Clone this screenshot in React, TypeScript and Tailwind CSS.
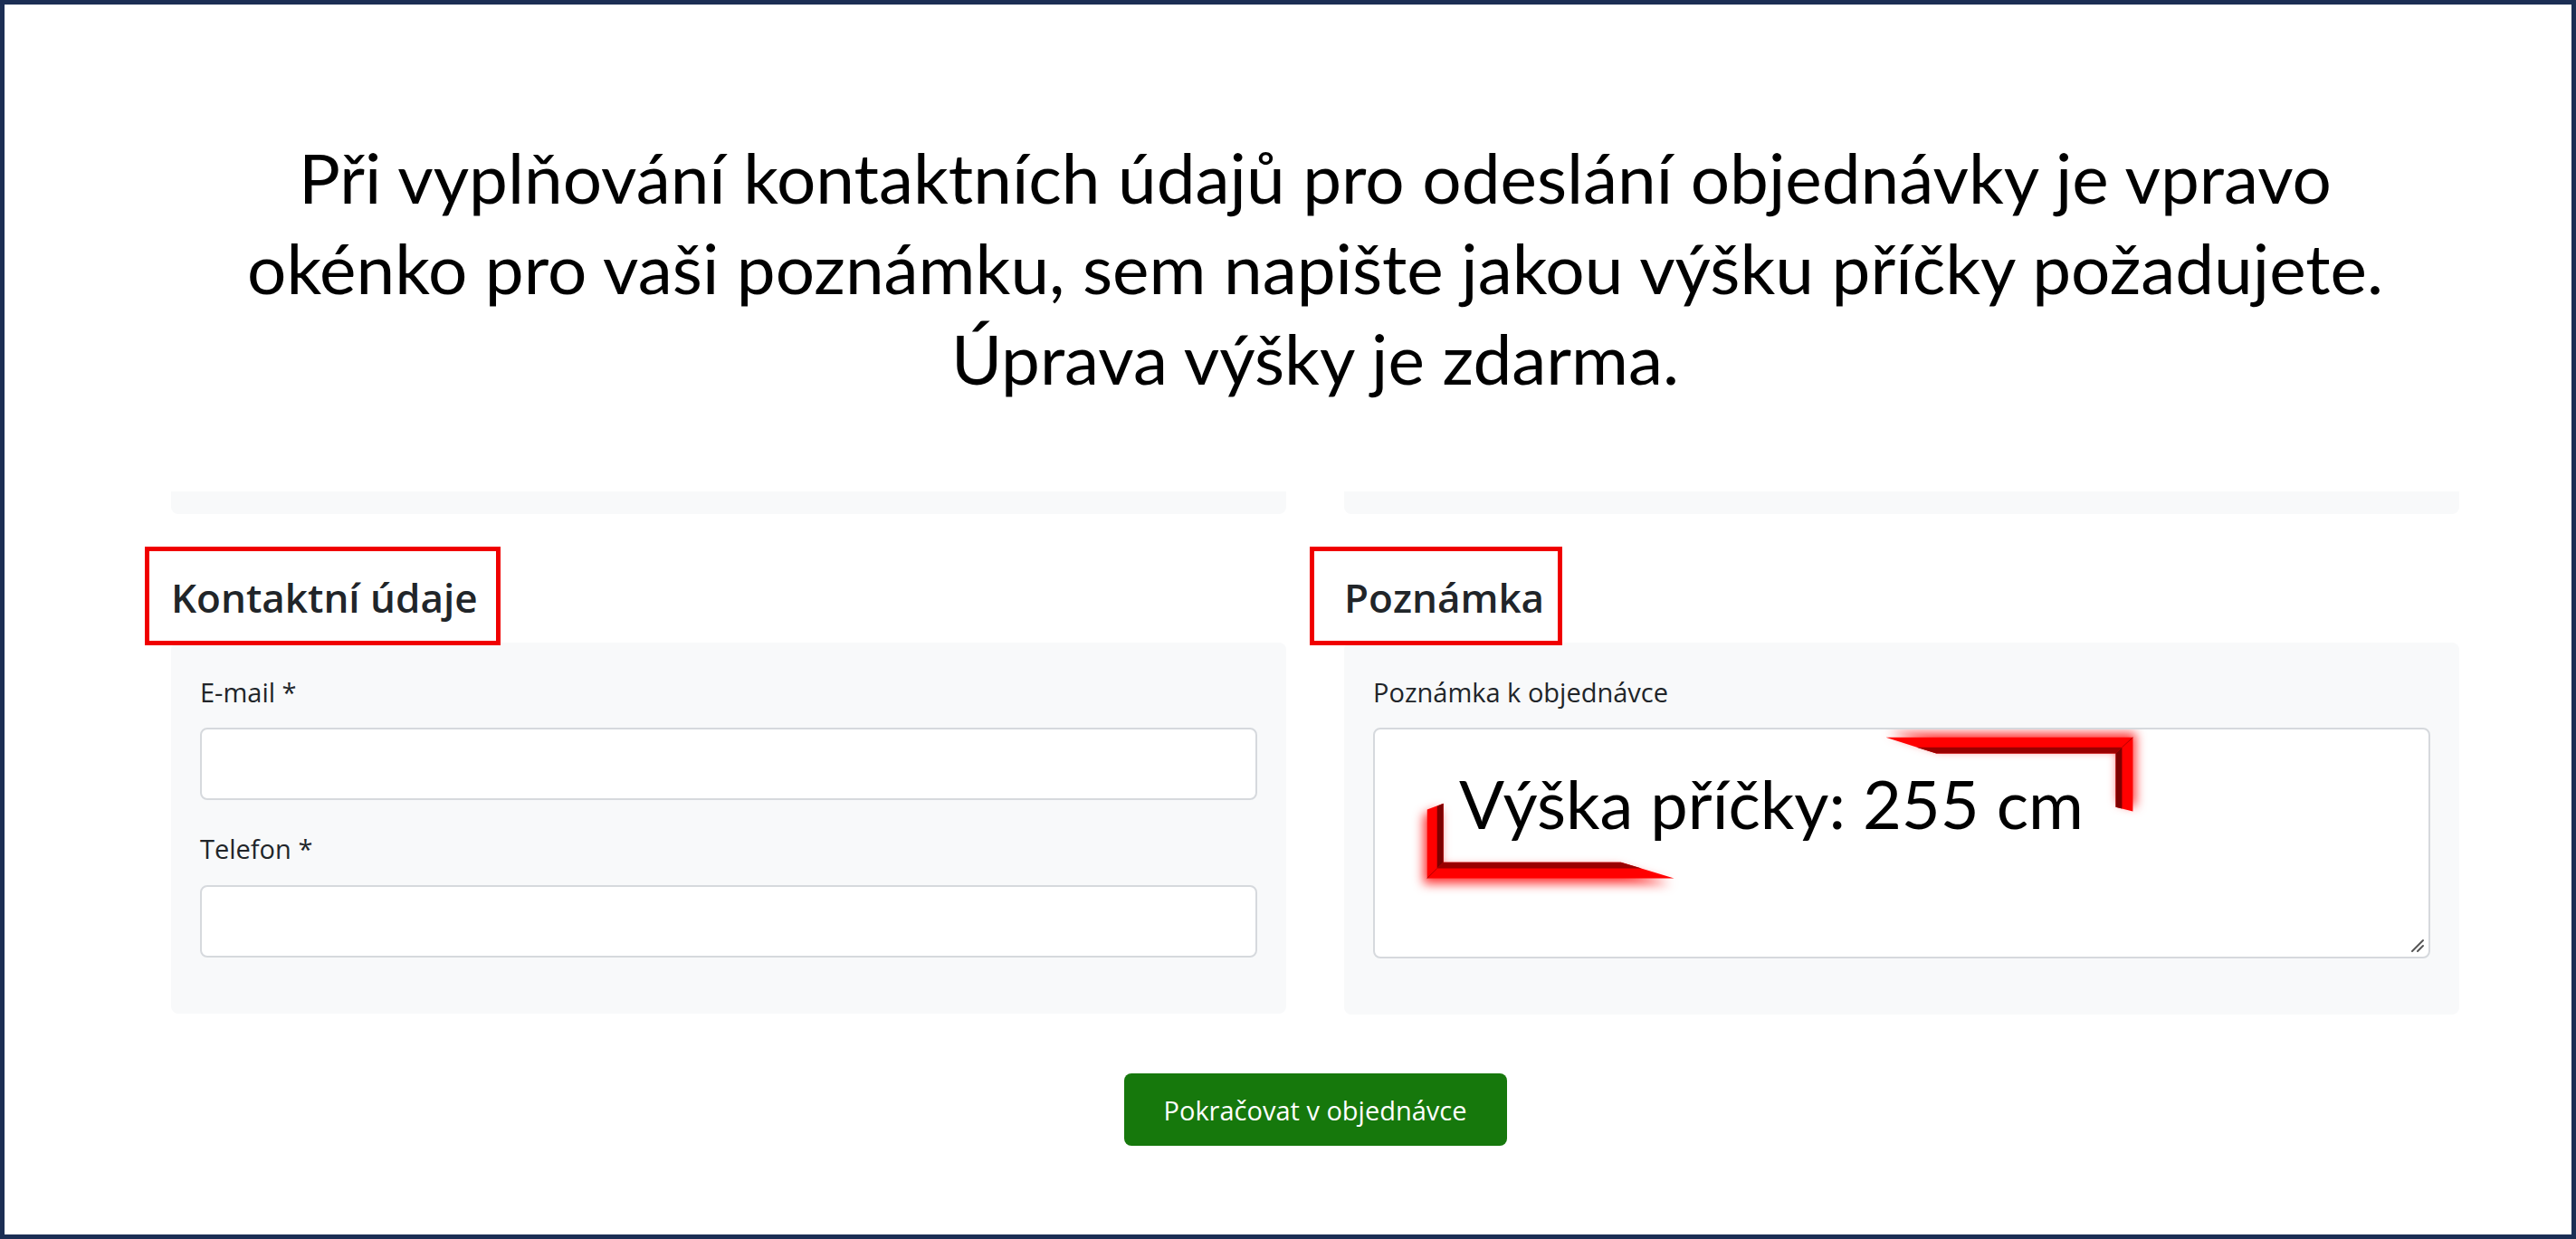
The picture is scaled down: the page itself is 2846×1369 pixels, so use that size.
import React from 'react';

const Heading = ({ title, boxClass }: { title: string; boxClass: string }) => (
  <h2 className="relative mt-[66px] mb-[23px] font-['Open_Sans',sans-serif] text-[44px] font-semibold leading-[1.2] text-[#212529]">
    <span className={`absolute top-[-30px] h-[109px] border-[5px] border-[#f00000] ${boxClass}`} />
    {title}
  </h2>
);

const Label = ({ children }: { children: React.ReactNode }) => (
  <label className="mb-[18px] block font-['Open_Sans',sans-serif] text-[29px] leading-[1.5] text-[#212529]">
    {children}
  </label>
);

const Input = () => (
  <input className="block h-[80px] w-full rounded-[8px] border-2 border-[#d6d9dd] bg-white px-4 outline-none" />
);

const Brackets = () => (
  <svg className="pointer-events-none absolute inset-0 h-full w-full" viewBox="0 0 1169 255" preserveAspectRatio="none">
    <defs>
      <filter id="glowTR" x="-20%" y="-60%" width="140%" height="220%">
        <feDropShadow dx="3" dy="-5" stdDeviation="6" floodColor="#ff0000" floodOpacity="0.8" />
      </filter>
      <filter id="glowBL" x="-20%" y="-60%" width="140%" height="220%">
        <feDropShadow dx="-4" dy="6" stdDeviation="6" floodColor="#ff0000" floodOpacity="0.8" />
      </filter>
    </defs>
    {/* top right corner */}
    <g filter="url(#glowTR)">
      <polygon points="567,9 841,9 841,92 822,87 822,27 623,27" fill="#ff0000" />
    </g>
    <polygon points="601,20 829,20 822,27 623,27" fill="#9a0000" />
    <polygon points="822,27 829,20 829,89 822,87" fill="#7d0000" />
    <line x1="829" y1="20" x2="841" y2="9" stroke="#b00000" strokeWidth="1" />
    {/* bottom left corner */}
    <g filter="url(#glowBL)">
      <polygon points="76,83 76,149 273,149 332,167 58,167 58,90" fill="#ff0000" />
    </g>
    <polygon points="69,86 76,83 76,149 69,156" fill="#7d0000" />
    <polygon points="69,156 76,149 273,149 296,156" fill="#9a0000" />
    <line x1="58" y1="167" x2="69" y2="156" stroke="#b00000" strokeWidth="1" />
  </svg>
);

const App = () => {
  return (
    <div className="h-[1369px] w-[2846px] overflow-hidden border-[5px] border-[#1b2e54] bg-white">
      <div className="ml-[184px] w-[2528px]">
        <h1 className="mt-[140px] whitespace-nowrap text-center font-[Lato,sans-serif] text-[76.5px] leading-[100px] text-black">
          Při vyplňování kontaktních údajů pro odeslání objednávky je vpravo
          <br />
          okénko pro vaši poznámku, sem napište jakou výšku příčky požadujete.
          <br />
          Úprava výšky je zdarma.
        </h1>

        <div className="mt-[98px] grid grid-cols-2 gap-x-[64px]">
          <div>
            <div className="h-[25px] rounded-b-[8px] bg-[#f8f9fa]" />
            <Heading title="Kontaktní údaje" boxClass="left-[-29px] w-[393px]" />
            <div className="rounded-[8px] bg-[#f8f9fa] px-[32px] pt-[33px] pb-[30px]">
              <div className="mb-[32px]">
                <Label>E-mail *</Label>
                <Input />
              </div>
              <div className="mb-[32px]">
                <Label>Telefon *</Label>
                <Input />
              </div>
            </div>
          </div>

          <div>
            <div className="h-[25px] rounded-b-[8px] bg-[#f8f9fa]" />
            <Heading title="Poznámka" boxClass="left-[-38px] w-[279px]" />
            <div className="rounded-[8px] bg-[#f8f9fa] px-[32px] pt-[33px] pb-[30px]">
              <div className="mb-[32px]">
                <Label>Poznámka k objednávce</Label>
                <div className="relative h-[255px] rounded-[8px] border-2 border-[#d6d9dd] bg-white">
                  <Brackets />
                  <span className="absolute left-[93px] top-[45px] whitespace-nowrap font-[Lato,sans-serif] text-[74px] leading-none text-black">
                    Výška příčky: 255 cm
                  </span>
                  <svg className="absolute bottom-[4px] right-[4px] h-[16px] w-[16px]" viewBox="0 0 16 16">
                    <line x1="2" y1="14" x2="14" y2="2" stroke="#555" strokeWidth="2" strokeLinecap="round" />
                    <line x1="8" y1="14" x2="14" y2="8" stroke="#555" strokeWidth="2" strokeLinecap="round" />
                  </svg>
                </div>
              </div>
            </div>
          </div>
        </div>

        <div className="mt-[65px] flex justify-center">
          <button className="flex h-[80px] w-[423px] items-center justify-center rounded-[8px] bg-[#16780c] font-['Open_Sans',sans-serif] text-[29px] text-white">
            Pokračovat v objednávce
          </button>
        </div>
      </div>
    </div>
  );
};

export default App;
